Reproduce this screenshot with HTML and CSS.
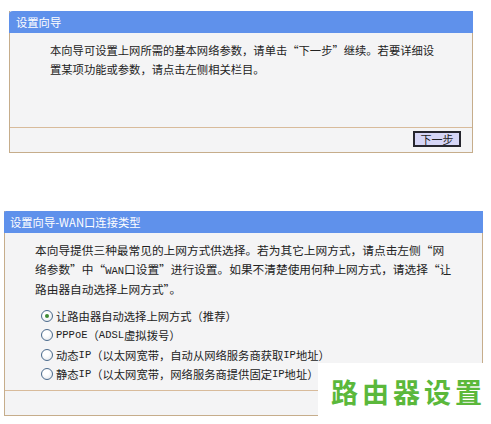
FILE: index.html
```html
<!DOCTYPE html>
<html lang="zh-CN">
<head>
    <meta charset="utf-8">
    <title>设置向导</title>
    <link rel="stylesheet" href="styles.css">
</head>
<body>

<!-- primer paso del asistente -->
<div class="panel panel-intro">
    <div class="panel-head">设置向导</div>
    <div class="panel-body">
        <p class="intro">本向导可设置上网所需的基本网络参数，请单击“下一步”继续。若要详细设置某项功能或参数，请点击左侧相关栏目。</p>
    </div>
    <div class="panel-foot">
        <button class="btn-next">下一步</button>
    </div>
</div>

<!-- tipo de conexion WAN -->
<div class="panel panel-wan">
    <div class="panel-head">设置向导-WAN口连接类型</div>
    <div class="panel-body">
        <p class="intro">本向导提供三种最常见的上网方式供选择。若为其它上网方式，请点击左侧“网络参数”中“<span class="en">WAN</span>口设置”进行设置。如果不清楚使用何种上网方式，请选择“让路由器自动选择上网方式”。</p>
        <div class="options">
            <label class="option"><span class="radio checked"></span>让路由器自动选择上网方式（推荐）</label>
            <label class="option"><span class="radio"></span><span class="en">PPPoE</span>（<span class="en">ADSL</span>虚拟拨号）</label>
            <label class="option"><span class="radio"></span>动态<span class="en">IP</span>（以太网宽带，自动从网络服务商获取<span class="en">IP</span>地址）</label>
            <label class="option"><span class="radio"></span>静态<span class="en">IP</span>（以太网宽带，网络服务商提供固定<span class="en">IP</span>地址）</label>
        </div>
    </div>
    <div class="panel-foot"></div>
</div>

<div class="watermark">路由器设置</div>

</body>
</html>
```

FILE: styles.css
```css
body {
    font-family: "Noto Sans CJK SC", "Liberation Sans", sans-serif;
    font-size: 11.3px;
    color: #222;
    background-color: #fff;
    margin: 0;
    padding: 11px 0 0 0;
    position: relative;
    height: 413px;
    overflow: hidden;
}

.en {
    font-family: "Liberation Mono", monospace;
    font-size: 10.5px;
}

.panel {
    border: 1px solid #c6ad8b;
    border-top: none;
    background-color: #f4f4f5;
}

.panel-intro {
    width: 462px;
    margin-left: 9px;
}

.panel-wan {
    width: 477px;
    margin-left: 4px;
    margin-top: 58px;
}

.panel-head {
    background-color: #5f91eb;
    color: #fff;
    height: 22px;
    line-height: 22px;
    padding-left: 7px;
    border-top-left-radius: 4px;
    margin: 0 -1px;
}

.panel-wan .panel-head {
    padding-left: 6px;
    border-top-left-radius: 2px;
}

.panel-body {
    border-bottom: 1px solid #d8bb9b;
}

.intro {
    margin: 0;
    line-height: 18.5px;
}

.panel-intro .panel-body {
    height: 86px;
    padding: 8px 37px 0 40px;
}

.panel-wan .panel-body {
    padding: 8px 29px 6px 30px;
}

.panel-wan .intro {
    font-size: 11.7px;
}

.panel-foot {
    height: 24px;
    display: flex;
    justify-content: flex-end;
    align-items: flex-start;
}

.btn-next {
    font-family: inherit;
    font-size: 11px;
    color: #222;
    background-color: #d6d6f6;
    border: 2px solid #26262e;
    width: 48px;
    height: 16px;
    padding: 0;
    line-height: 12px;
    margin: 3px 11px 0 0;
}

.options {
    margin-top: 8px;
    padding-left: 6px;
}

.option {
    display: flex;
    align-items: center;
    height: 19.3px;
}

.radio {
    width: 10px;
    height: 10px;
    border: 1px solid #4a6a8c;
    border-radius: 50%;
    background: radial-gradient(circle at 40% 35%, #fff 30%, #dfe3e8 100%);
    margin-right: 3px;
    position: relative;
}

.radio.checked::after {
    content: "";
    position: absolute;
    left: 3px;
    top: 3px;
    width: 4px;
    height: 4px;
    border-radius: 50%;
    background-color: #3f8a34;
}

.watermark {
    position: absolute;
    left: 318px;
    top: 363px;
    width: 173px;
    height: 61px;
    background-color: #fff;
    color: #5bb83b;
    font-size: 27px;
    font-weight: bold;
    letter-spacing: 4px;
    padding-left: 13px;
    line-height: 58px;
    box-sizing: border-box;
}
```
